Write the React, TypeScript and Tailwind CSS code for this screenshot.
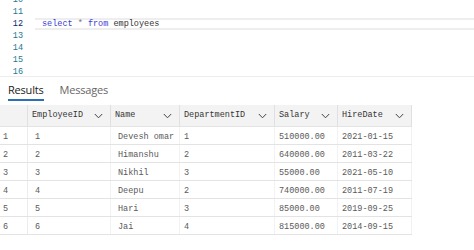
import React from 'react';

const rows = [
  { id: 1, name: 'Devesh omar', dept: 1, salary: '510000.00', hire: '2021-01-15' },
  { id: 2, name: 'Himanshu', dept: 2, salary: '640000.00', hire: '2011-03-22' },
  { id: 3, name: 'Nikhil', dept: 3, salary: '55000.00', hire: '2021-05-10' },
  { id: 4, name: 'Deepu', dept: 2, salary: '740000.00', hire: '2011-07-19' },
  { id: 5, name: 'Hari', dept: 3, salary: '85000.00', hire: '2019-09-25' },
  { id: 6, name: 'Jai', dept: 4, salary: '815000.00', hire: '2014-09-15' },
];

const columns = ['EmployeeID', 'Name', 'DepartmentID', 'Salary', 'HireDate'];

const gridCols = 'grid grid-cols-[28px_83px_69px_95px_63px_74px]';

const mono = { fontFamily: '"Liberation Mono", "DejaVu Sans Mono", monospace' };

function Chevron() {
  return (
    <svg width="9" height="6" viewBox="0 0 9 6" className="shrink-0">
      <path d="M0.8 1 L4.5 4.8 L8.2 1" fill="none" stroke="#444" strokeWidth="1" />
    </svg>
  );
}

export default function App() {
  const lines = [10, 11, 12, 13, 14, 15, 16];

  return (
    <div className="w-[474px] h-[250px] overflow-hidden bg-white" style={mono}>
      {/* editor */}
      <div className="h-[77px] overflow-hidden border-b border-[#ececec]">
        <div className="-mt-[6px]">
          {lines.map((n) => (
            <div key={n} className="flex h-[12px] items-center">
              <div
                className={`w-[23px] text-right text-[8.5px] ${n === 12 ? 'text-[#0b216f]' : 'text-[#237893]'}`}
              >
                {n}
              </div>
              <div
                className={`ml-[12px] flex-1 h-[12px] flex items-center pl-[7px] text-[8.5px] ${
                  n === 12 ? 'border-y-2 border-[#eeeeee]' : ''
                }`}
              >
                {n === 12 && (
                  <span className="whitespace-pre">
                    <span className="text-[#3a3ad6]">select</span>
                    <span className="text-[#777]"> * </span>
                    <span className="text-[#3a3ad6]">from</span>
                    <span className="text-[#333]"> employees</span>
                  </span>
                )}
              </div>
            </div>
          ))}
        </div>
      </div>

      {/* tabs */}
      <div
        className="flex gap-[16px] pl-[8px] pt-[5px] h-[28px] text-[11px]"
        style={{ fontFamily: '"Open Sans", "Noto Sans", sans-serif' }}
      >
        <div className="flex flex-col items-start">
          <span className="text-[#222] leading-[15px] tracking-[-0.2px]">Results</span>
          <div className="mt-[2px] h-[2px] w-full bg-[#2b6fb6]" />
        </div>
        <span className="text-[#666] leading-[15px] tracking-[-0.2px]">Messages</span>
      </div>

      {/* grid */}
      <div className="w-[412px] text-[8.5px]">
        <div className={`${gridCols} h-[22px] bg-[#f3f3f3] border-b border-[#e3e3e3]`}>
          <div className="border-r border-[#e0e0e0]" />
          {columns.map((c) => (
            <div
              key={c}
              className="flex items-center justify-between pl-[4px] pr-[7px] text-[#333] border-r border-[#e0e0e0]"
            >
              <span className="truncate">{c}</span>
              <Chevron />
            </div>
          ))}
        </div>
        {rows.map((r) => (
          <div key={r.id} className={`${gridCols} h-[18px] border-b border-[#e3e3e3] text-[#5a5a5a]`}>
            <div className="flex items-center pt-[3px] pl-[3px] border-r border-[#ececec]">{r.id}</div>
            <div className="flex items-center pt-[3px] pl-[7px] border-r border-[#f2f2f2]">{r.id}</div>
            <div className="flex items-center pt-[3px] pl-[7px] border-r border-[#f2f2f2]">{r.name}</div>
            <div className="flex items-center pt-[3px] pl-[4px] border-r border-[#f2f2f2]">{r.dept}</div>
            <div className="flex items-center pt-[3px] pl-[4px] border-r border-[#f2f2f2]">{r.salary}</div>
            <div className="flex items-center pt-[3px] pl-[4px] border-r border-[#f2f2f2]">{r.hire}</div>
          </div>
        ))}
      </div>
    </div>
  );
}
